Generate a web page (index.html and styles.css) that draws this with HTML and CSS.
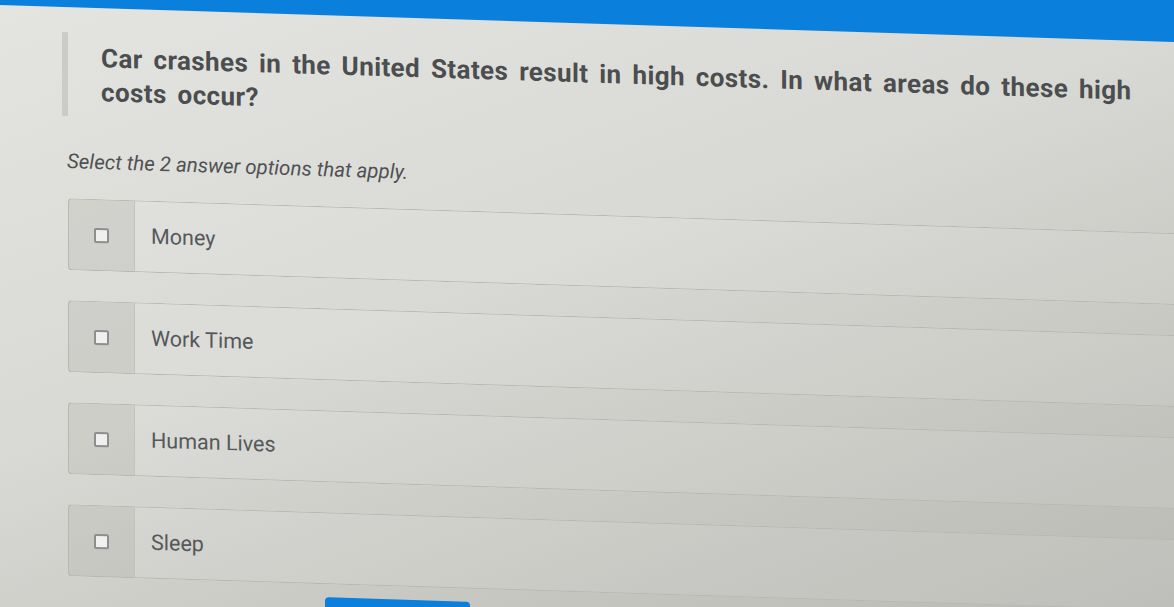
FILE: index.html
```html
<!DOCTYPE html>
<html lang="en">

<head>
    <meta charset="UTF-8">
    <meta name="viewport" content="width=device-width, initial-scale=1.0">
    <title>Quiz Question</title>
    <link rel="stylesheet" href="styles.css">
</head>

<body>
    <div class="page">
        <div class="topbar"></div>

        <div class="question">
            <p>Car crashes in the United States result in high costs. In what areas do these high costs occur?</p>
        </div>

        <p class="hint">Select the 2 answer options that apply.</p>

        <ul class="options">
            <li class="option">
                <span class="check"><span class="box"></span></span>
                <span class="label">Money</span>
            </li>
            <li class="option">
                <span class="check"><span class="box"></span></span>
                <span class="label">Work Time</span>
            </li>
            <li class="option">
                <span class="check"><span class="box"></span></span>
                <span class="label">Human Lives</span>
            </li>
            <li class="option">
                <span class="check"><span class="box"></span></span>
                <span class="label">Sleep</span>
            </li>
        </ul>

        <div class="actions">
            <!-- submit button, only its top edge is in view -->
            <button class="submit" aria-label="Submit"></button>
        </div>
    </div>
</body>

</html>
```

FILE: styles.css
```css
html, body {
    height: 100%;
}

body {
    margin: 0;
    overflow: hidden;
    font-family: Roboto, "Liberation Sans", sans-serif;
    color: #4b4d4f;
    background: linear-gradient(160deg, #e4e5e1 0%, #d8d9d4 45%, #c3c4be 80%, #b9bab5 100%);
}

.page {
    transform: skewY(1.8deg);
    transform-origin: 0 0;
}

.topbar {
    height: 44px;
    margin-top: -39px;
    background: #0a7fdc;
}

.question {
    margin: 25px 0 0 62px;
    padding: 8px 0 8px 33px;
    border-left: 6px solid #cbccc7;
}

.question p {
    margin: 0;
    width: 1095px;
    font-size: 26px;
    font-weight: 700;
    letter-spacing: 0.4px;
    word-spacing: 4px;
    line-height: 34px;
}

.hint {
    margin: 33px 0 0 67px;
    font-size: 20.5px;
    font-style: italic;
    line-height: 24px;
    color: #4f5153;
}

.options {
    list-style-type: none;
    margin: 25px 0 0 68px;
    padding: 0;
}

.option {
    display: flex;
    height: 70px;
    margin-bottom: 30px;
    border: 1px solid #b7b8b3;
    border-right: none;
    border-radius: 4px 0 0 4px;
    background: rgba(255, 255, 255, 0.08);
}

.check {
    width: 65px;
    display: flex;
    align-items: center;
    justify-content: center;
    background: rgba(150, 150, 142, 0.2);
    border-right: 1px solid #c2c3be;
}

.box {
    width: 11px;
    height: 11px;
    border: 2px solid #8d8f8f;
    border-radius: 2px;
    background: #f0f0ee;
}

.label {
    display: flex;
    align-items: center;
    padding-left: 16px;
    padding-bottom: 2px;
    font-size: 21.5px;
    color: #56585a;
}

.actions {
    margin: -17px 0 0 325px;
}

.submit {
    display: block;
    width: 145px;
    height: 36px;
    border: none;
    border-radius: 4px;
    background: #0a7fdc;
}
```
